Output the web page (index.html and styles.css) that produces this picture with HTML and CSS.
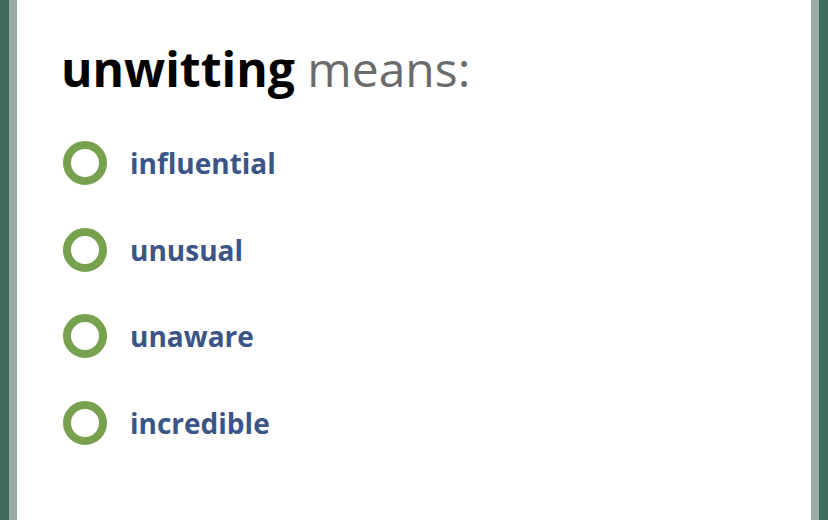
FILE: index.html
```html
<!DOCTYPE html>
<html lang="en">
<head>
    <meta charset="UTF-8">
    <title>Vocabulary question</title>
    <link rel="stylesheet" href="styles.css">
</head>

<body>
    <main class="page">
        <section class="card">
            <h1 class="question"><span class="word">unwitting</span> means:</h1>
            <ul class="choices">
                <li class="choice"><span class="radio"></span><span class="label">influential</span></li>
                <li class="choice"><span class="radio"></span><span class="label">unusual</span></li>
                <li class="choice"><span class="radio"></span><span class="label">unaware</span></li>
                <li class="choice"><span class="radio"></span><span class="label">incredible</span></li>
            </ul>
        </section>
    </main>
</body>
</html>
```

FILE: styles.css
```css
html,
body {
    margin: 0;
    height: 100%;
}

body {
    background-color: #3f6b5d;
    font-family: "Open Sans", sans-serif;
}

.page {
    height: 100%;
    padding: 0 9px;
    box-sizing: border-box;
}

.card {
    height: 100%;
    box-sizing: border-box;
    background-color: white;
    border-left: 8px solid #9aaca6;
    border-right: 8px solid #9aaca6;
    padding: 40px 44px 0 44px;
}

.question {
    margin: 0;
    font-size: 48px;
    line-height: 58px;
    font-weight: 400;
    color: #6b6b6b;
}

.word {
    font-weight: 700;
    color: #000;
}

.choices {
    list-style: none;
    margin: 43px 0 0 0;
    padding: 0;
    display: flex;
    flex-direction: column;
    gap: 42.5px;
}

.choice {
    display: flex;
    align-items: center;
    gap: 24px;
    padding-left: 2px;
    cursor: pointer;
}

.radio {
    width: 44px;
    height: 44px;
    box-sizing: border-box;
    border: 8px solid #77a14e;
    border-radius: 50%;
}

.label {
    font-size: 28px;
    line-height: 44px;
    font-weight: 700;
    color: #3c5587;
    margin-left: -1px;
}
```
